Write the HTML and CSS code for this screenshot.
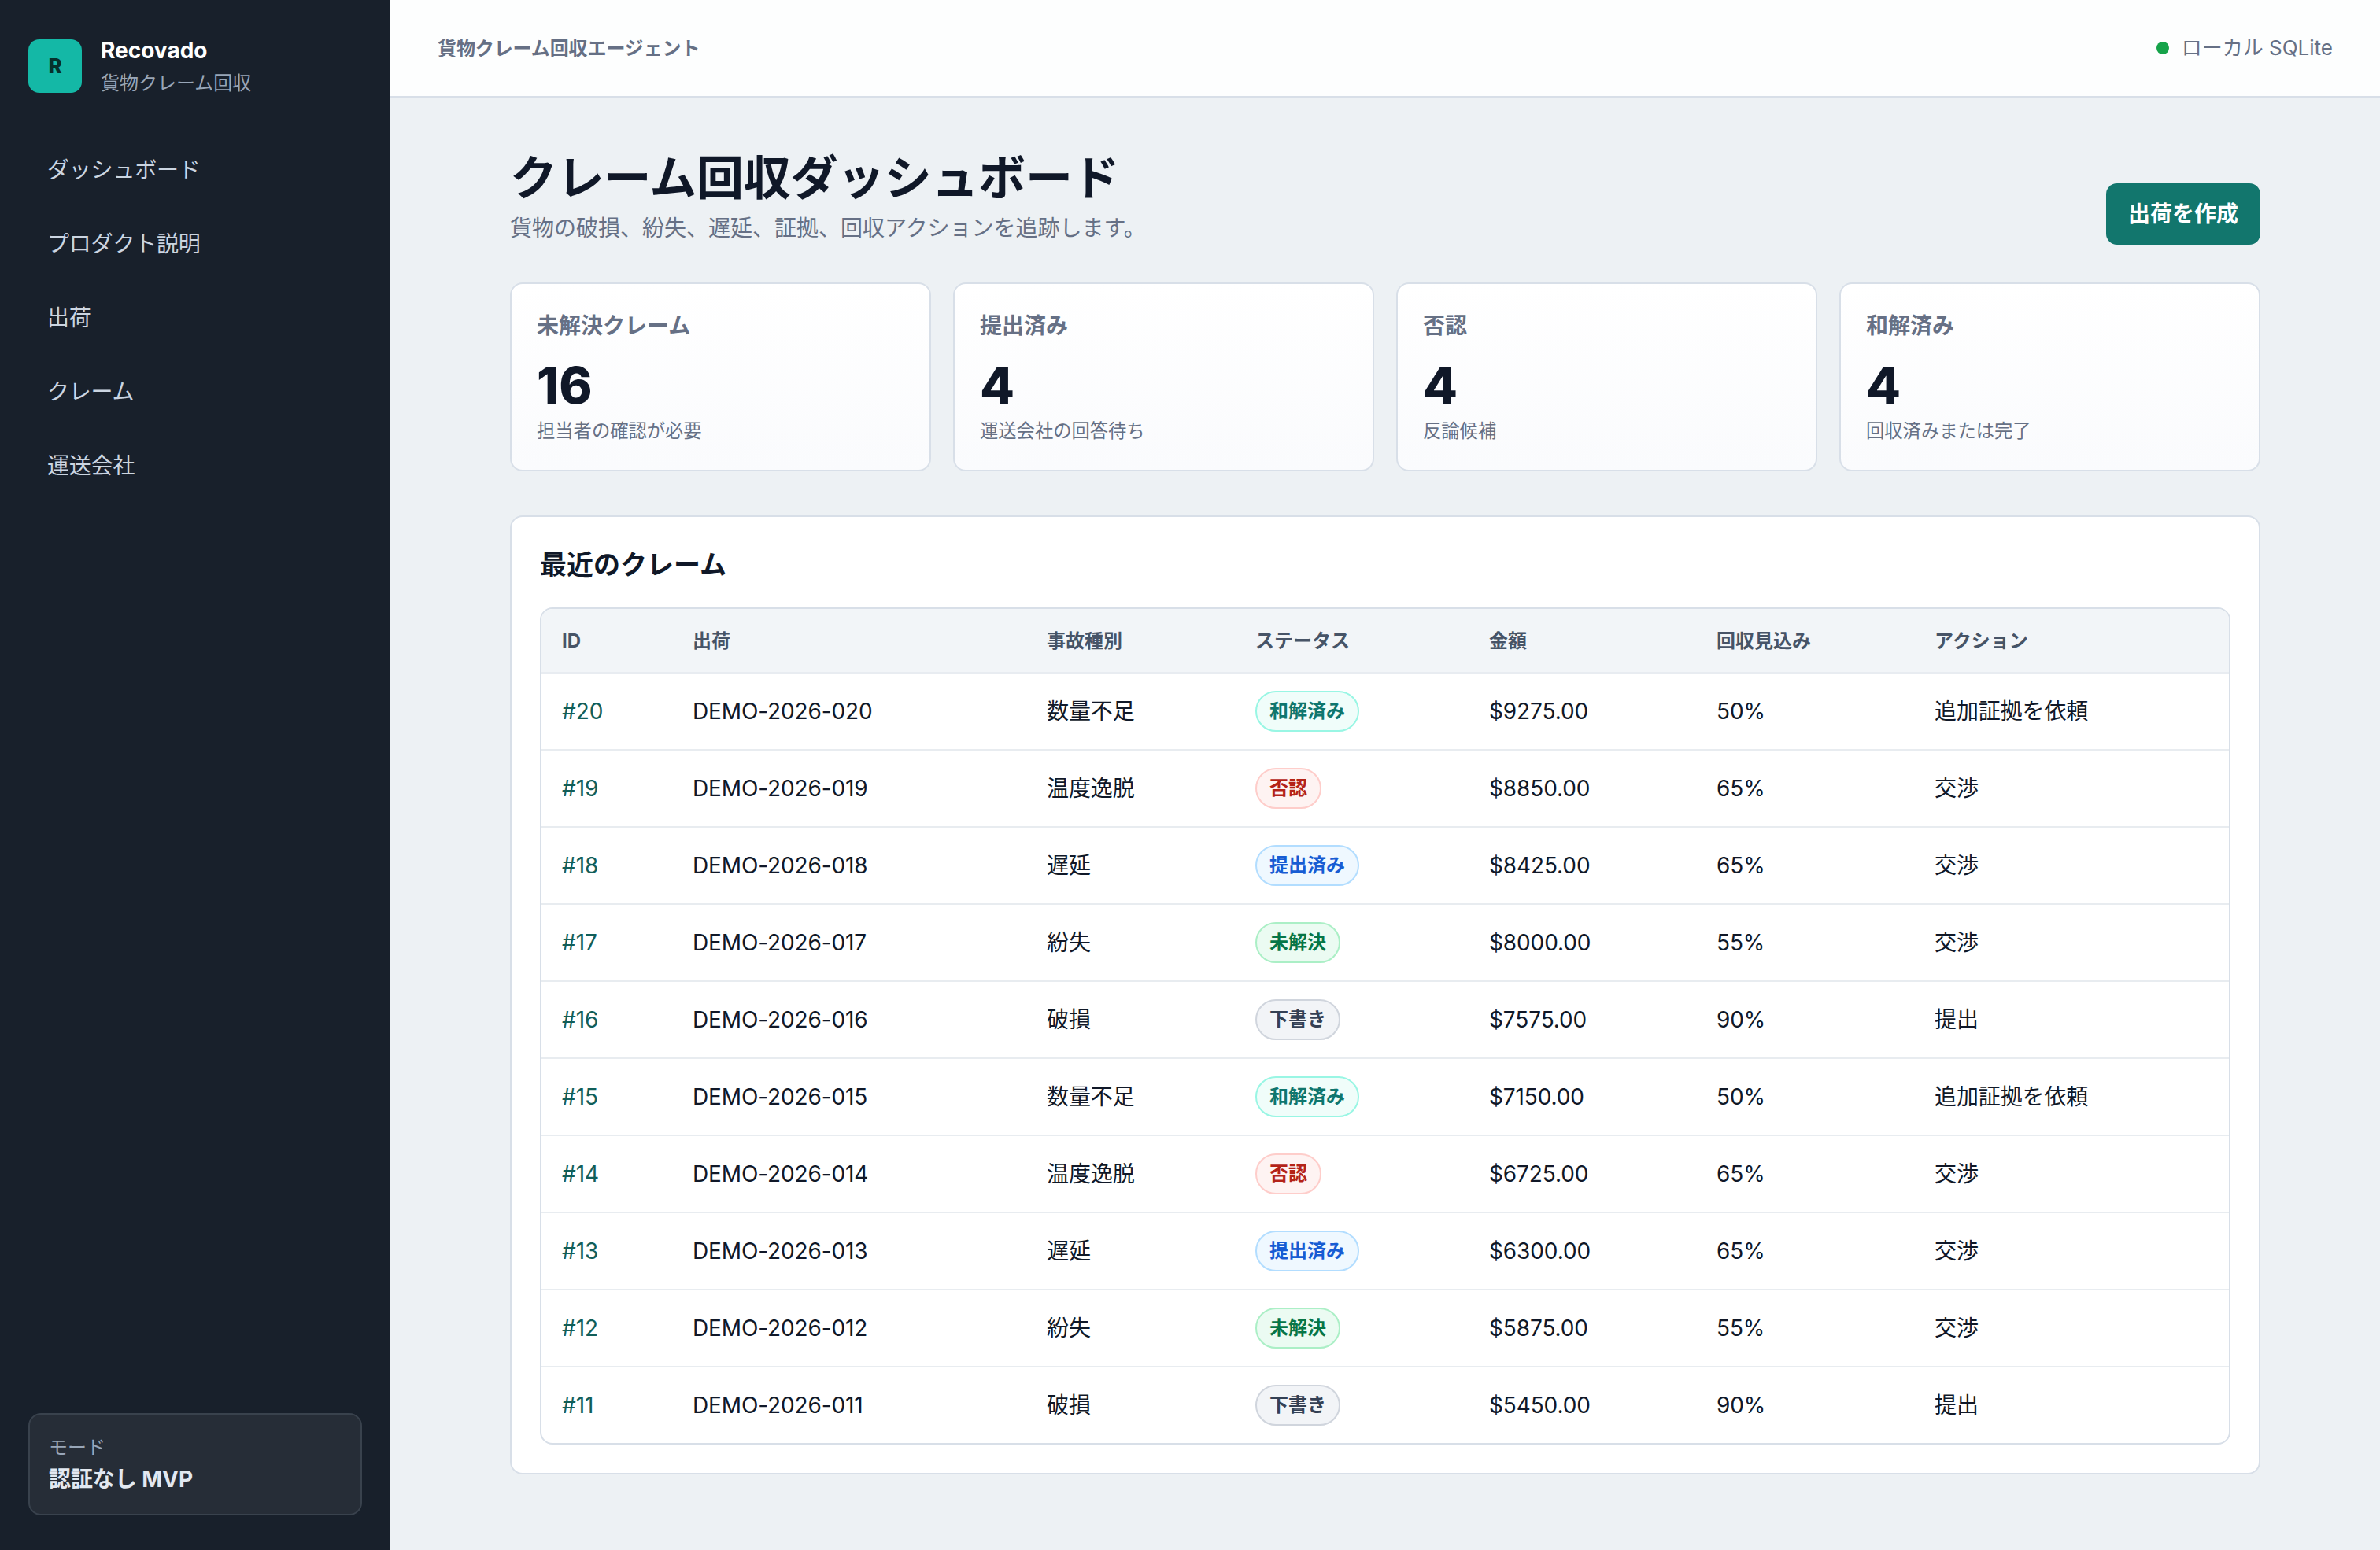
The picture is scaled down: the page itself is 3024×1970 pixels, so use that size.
FILE: index.html
```html
<!DOCTYPE html>
<html lang="ja">
<head>
<meta charset="utf-8">
<title>Recovado</title>
<link rel="stylesheet" href="styles.css">
</head>
<body>
<div class="app">
  <aside class="sidebar">
    <div class="brand">
      <div class="brand-mark">R</div>
      <div class="brand-text">
        <div class="brand-name">Recovado</div>
        <div class="brand-sub">貨物クレーム回収</div>
      </div>
    </div>
    <nav class="nav">
      <a class="nav-item">ダッシュボード</a>
      <a class="nav-item">プロダクト説明</a>
      <a class="nav-item">出荷</a>
      <a class="nav-item">クレーム</a>
      <a class="nav-item">運送会社</a>
    </nav>
    <div class="mode">
      <div class="mode-label">モード</div>
      <div class="mode-value">認証なし MVP</div>
    </div>
  </aside>
  <div class="main">
    <header class="topbar">
      <div class="topbar-title">貨物クレーム回収エージェント</div>
      <div class="topbar-status"><span class="dot"></span><span>ローカル SQLite</span></div>
    </header>
    <main class="content">
      <div class="page-head">
        <div>
          <h1 class="page-title">クレーム回収ダッシュボード</h1>
          <p class="page-sub">貨物の破損、紛失、遅延、証拠、回収アクションを追跡します。</p>
        </div>
        <a class="button">出荷を作成</a>
      </div>
      <section class="metrics">
        <div class="metric"><div class="metric-label">未解決クレーム</div><div class="metric-value">16</div><div class="metric-note">担当者の確認が必要</div></div>
        <div class="metric"><div class="metric-label">提出済み</div><div class="metric-value">4</div><div class="metric-note">運送会社の回答待ち</div></div>
        <div class="metric"><div class="metric-label">否認</div><div class="metric-value">4</div><div class="metric-note">反論候補</div></div>
        <div class="metric"><div class="metric-label">和解済み</div><div class="metric-value">4</div><div class="metric-note">回収済みまたは完了</div></div>
      </section>
      <section class="panel">
        <h2 class="panel-title">最近のクレーム</h2>
        <div class="table-wrap">
          <table class="table">
            <colgroup><col class="c-id"><col class="c-ship"><col class="c-type"><col class="c-status"><col class="c-amount"><col class="c-rate"><col></colgroup>
            <thead><tr><th>ID</th><th>出荷</th><th>事故種別</th><th>ステータス</th><th>金額</th><th>回収見込み</th><th>アクション</th></tr></thead>
            <tbody>
              <tr><td><a class="link">#20</a></td><td>DEMO-2026-020</td><td>数量不足</td><td><span class="badge settled">和解済み</span></td><td>$9275.00</td><td>50%</td><td>追加証拠を依頼</td></tr>
              <tr><td><a class="link">#19</a></td><td>DEMO-2026-019</td><td>温度逸脱</td><td><span class="badge denied">否認</span></td><td>$8850.00</td><td>65%</td><td>交渉</td></tr>
              <tr><td><a class="link">#18</a></td><td>DEMO-2026-018</td><td>遅延</td><td><span class="badge filed">提出済み</span></td><td>$8425.00</td><td>65%</td><td>交渉</td></tr>
              <tr><td><a class="link">#17</a></td><td>DEMO-2026-017</td><td>紛失</td><td><span class="badge open">未解決</span></td><td>$8000.00</td><td>55%</td><td>交渉</td></tr>
              <tr><td><a class="link">#16</a></td><td>DEMO-2026-016</td><td>破損</td><td><span class="badge draft">下書き</span></td><td>$7575.00</td><td>90%</td><td>提出</td></tr>
              <tr><td><a class="link">#15</a></td><td>DEMO-2026-015</td><td>数量不足</td><td><span class="badge settled">和解済み</span></td><td>$7150.00</td><td>50%</td><td>追加証拠を依頼</td></tr>
              <tr><td><a class="link">#14</a></td><td>DEMO-2026-014</td><td>温度逸脱</td><td><span class="badge denied">否認</span></td><td>$6725.00</td><td>65%</td><td>交渉</td></tr>
              <tr><td><a class="link">#13</a></td><td>DEMO-2026-013</td><td>遅延</td><td><span class="badge filed">提出済み</span></td><td>$6300.00</td><td>65%</td><td>交渉</td></tr>
              <tr><td><a class="link">#12</a></td><td>DEMO-2026-012</td><td>紛失</td><td><span class="badge open">未解決</span></td><td>$5875.00</td><td>55%</td><td>交渉</td></tr>
              <tr><td><a class="link">#11</a></td><td>DEMO-2026-011</td><td>破損</td><td><span class="badge draft">下書き</span></td><td>$5450.00</td><td>90%</td><td>提出</td></tr>
            </tbody>
          </table>
        </div>
      </section>
    </main>
  </div>
</div>
</body>
</html>
```
FILE: styles.css
```css
* { box-sizing: border-box; margin: 0; padding: 0; }
body {
  font-family: Inter, "Noto Sans CJK JP", sans-serif;
  font-size: 28px;
  line-height: 40px;
  color: #101828;
  background: #edf1f4;
}
.app { display: flex; height: 1970px; overflow: hidden; }

.sidebar {
  width: 496px;
  flex: none;
  display: flex;
  flex-direction: column;
  padding: 44px 36px;
  background: #18202b;
}
.brand { display: flex; align-items: center; gap: 24px; height: 80px; }
.brand-mark {
  width: 68px;
  height: 68px;
  border-radius: 14px;
  background: #14b8a6;
  color: #06302b;
  font-weight: 800;
  font-size: 26px;
  line-height: 68px;
  text-align: center;
}
.brand-name { font-weight: 700; color: #fff; line-height: 42px; }
.brand-sub { padding-top: 2px; font-size: 24px; line-height: 38px; color: #98a6b8; }
.nav { display: flex; flex-direction: column; gap: 8px; margin-top: 48px; }
.nav-item { height: 86px; line-height: 89px; padding: 0 24px; color: #cbd5e1; letter-spacing: -0.2px; }
.mode {
  margin-top: auto;
  height: 130px;
  padding: 23px 24px 19px;
  border: 2px solid #39424d;
  border-radius: 16px;
  background: #262d37;
}
.mode-label { font-size: 24px; line-height: 38px; color: #98a6b8; }
.mode-value { font-weight: 700; line-height: 42px; color: #e2e8f0; letter-spacing: -0.1px; }

.main { flex: 1; }
.topbar {
  display: flex;
  justify-content: space-between;
  align-items: center;
  height: 124px;
  padding: 0 60px;
  border-bottom: 2px solid #d8dfe8;
  background: #fdfefe;
  color: #667085;
}
.topbar-title { padding-top: 2px; font-size: 24px; font-weight: 700; letter-spacing: -0.1px; }
.topbar-status { display: flex; align-items: center; gap: 16px; font-size: 26px; line-height: 42px; }
.dot { width: 16px; height: 16px; border-radius: 50%; background: #16a34a; }

.content { width: 2224px; margin: 0 auto; padding-top: 60px; }
.page-head { display: flex; justify-content: space-between; align-items: flex-end; height: 127px; }
.page-title { font-size: 60px; line-height: 84px; font-weight: 700; letter-spacing: -0.3px; }
.page-sub { padding-top: 2px; line-height: 41px; color: #667085; }
.button {
  height: 78px;
  padding: 0 28px;
  border-radius: 14px;
  background: #12766d;
  color: #fff;
  font-weight: 700;
  line-height: 78px;
}

.metrics { display: grid; grid-template-columns: repeat(4, 1fr); gap: 28px; margin-top: 48px; }
.metric {
  height: 240px;
  padding: 32px;
  border: 2px solid #d8dfe8;
  border-radius: 16px;
  background: linear-gradient(#fff, #fafbfd);
}
.metric-label { font-weight: 700; line-height: 42px; color: #667085; }
.metric-value { margin-top: 16px; font-size: 64px; line-height: 78px; font-weight: 800; }
.metric-note { font-size: 23.3px; line-height: 37px; color: #667085; }

.panel {
  margin-top: 56px;
  padding: 36px;
  border: 2px solid #d8dfe8;
  border-radius: 16px;
  background: #fff;
}
.panel-title { font-size: 34px; line-height: 50px; height: 79px; font-weight: 700; }
.table-wrap { border: 2px solid #d8dfe8; border-radius: 16px; overflow: hidden; }
.table { width: 100%; table-layout: fixed; border-collapse: separate; border-spacing: 0; }
.c-id { width: 166px; }
.c-ship { width: 450px; }
.c-type { width: 265px; }
.c-status { width: 297px; }
.c-amount { width: 289px; }
.c-rate { width: 277px; }
.table th {
  height: 82px;
  padding: 1px 26px 0;
  border-bottom: 2px solid #e8ecf1;
  background: #f2f5f8;
  color: #475467;
  font-size: 24px;
  font-weight: 700;
  text-align: left;
  white-space: nowrap;
}
.table td { height: 98px; padding: 0 26px; border-bottom: 2px solid #e8ecf0; white-space: nowrap; vertical-align: middle; letter-spacing: -0.12px; }
.table tr:last-child td { height: 96px; border-bottom: 0; }
.link { color: #115e59; letter-spacing: 0; }
.badge {
  display: block;
  width: fit-content;
  height: 52px;
  padding: 0 16px;
  border: 2px solid;
  border-radius: 26px;
  font-size: 24px;
  font-weight: 700;
  line-height: 48px;
  letter-spacing: 0;
}
.settled { color: #0f766e; background: #f0fdfa; border-color: #99f6e4; }
.denied { color: #b42318; background: #fef3f2; border-color: #fecdca; }
.filed { color: #175cd3; background: #eff8ff; border-color: #b2ddff; }
.open { color: #067647; background: #ebfbf2; border-color: #abefc6; }
.draft { color: #344054; background: #f2f4f7; border-color: #d0d5dd; }
```
